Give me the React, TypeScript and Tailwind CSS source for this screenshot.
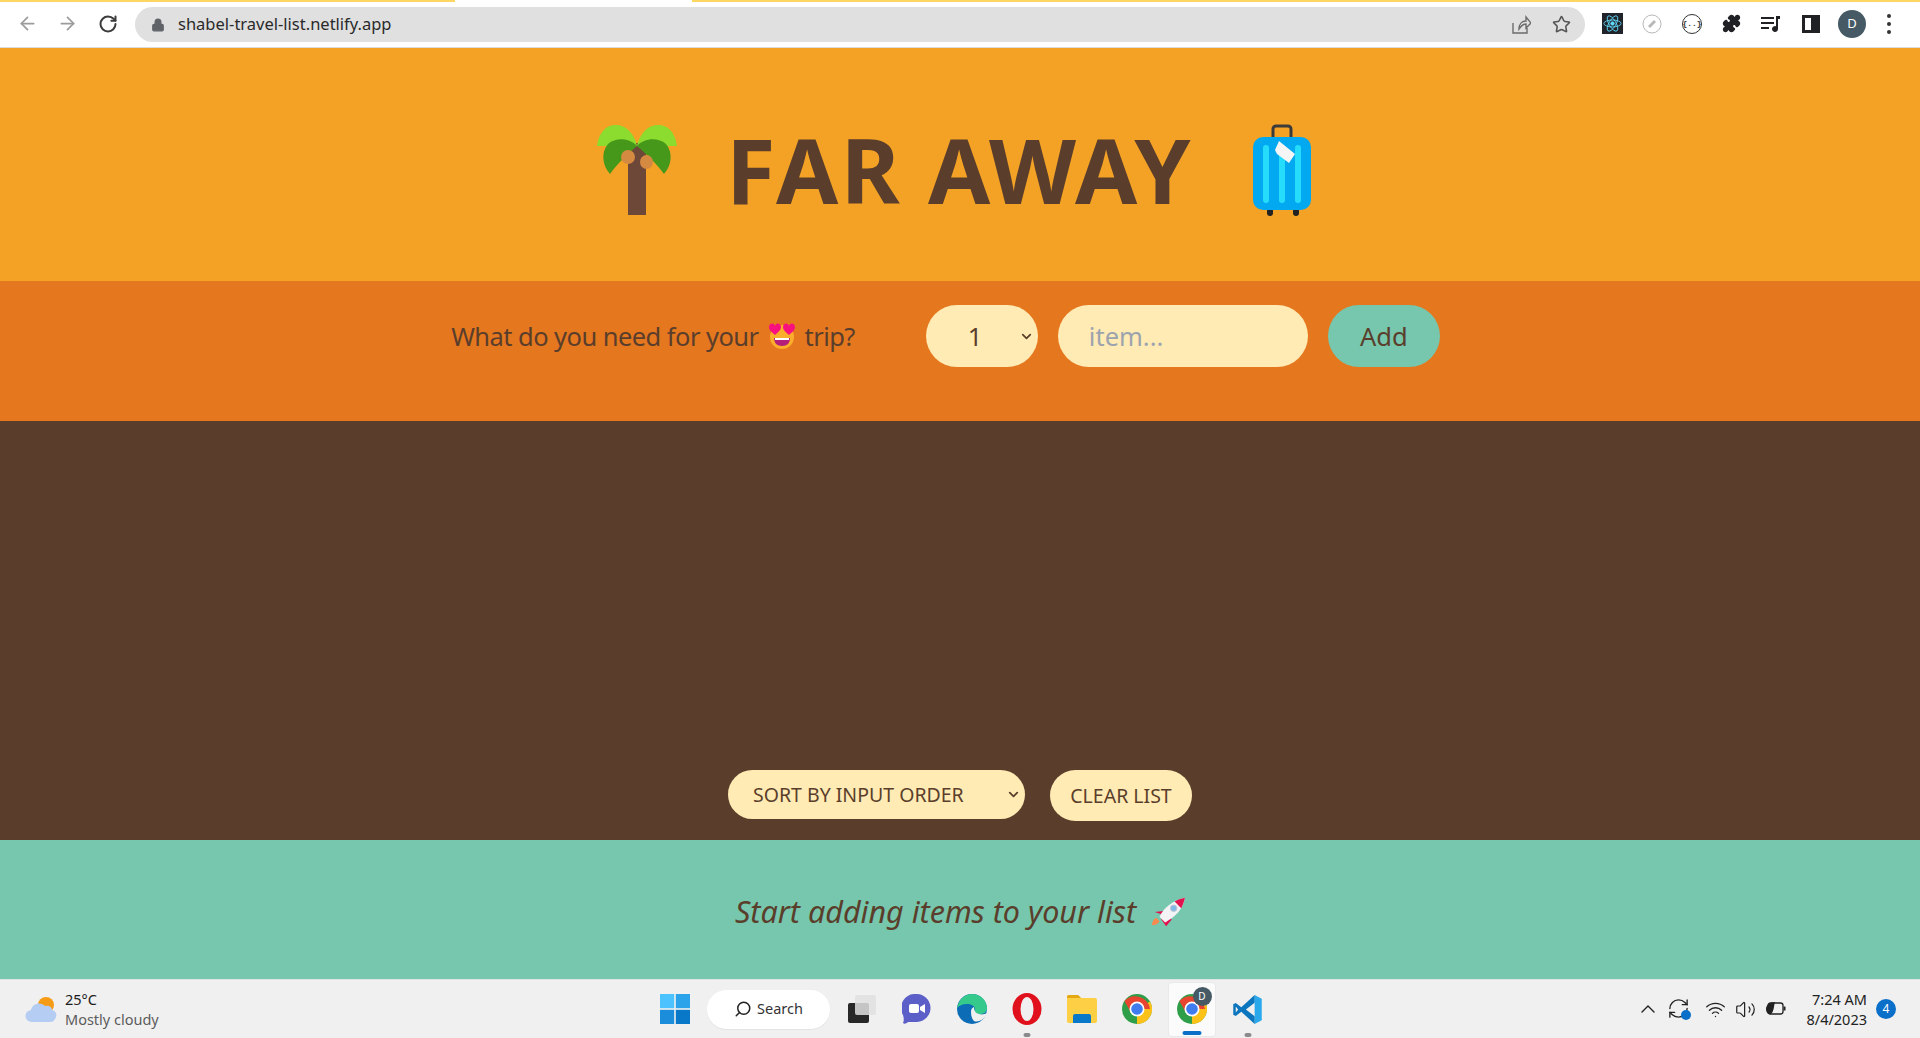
import { ArrowLeft, ArrowRight, RotateCw, RefreshCw, Lock, Star, Puzzle, ChevronUp, ChevronDown, Wifi, Volume2, Search } from 'lucide-react'

const sans = "font-['Noto_Sans','Open_Sans',sans-serif]"

function Palm() {
  return (
    <svg width="80" height="90" viewBox="0 0 80 90">
      <rect x="31" y="18" width="18" height="72" fill="#6d4737" />
      <path d="M0 21C2 7 9 0 19 0c10 0 18 8 21 21C43 8 51 0 61 0c10 0 17 7 19 21z" fill="#8bdc2e" />
      <path d="M13 49C5 40 4 27 11 19c8-7 22-6 29 2-9 8-20 18-27 28z" fill="#46981a" />
      <path d="M67 49c8-9 9-22 2-30-8-7-22-6-29 2 9 8 20 18 27 28z" fill="#46981a" />
      <ellipse cx="31" cy="32" rx="7" ry="7" fill="#d58a41" />
      <ellipse cx="49.5" cy="37" rx="6.5" ry="7" fill="#d58a41" />
    </svg>
  )
}

function Suitcase() {
  return (
    <svg width="58" height="92" viewBox="0 0 58 92">
      <path d="M20 14V5a3 3 0 0 1 3-3h12a3 3 0 0 1 3 3v9" fill="none" stroke="#3b3b3b" strokeWidth="3" />
      <rect x="14" y="84" width="6" height="8" rx="3" fill="#222" />
      <rect x="40" y="84" width="6" height="8" rx="3" fill="#222" />
      <rect x="0" y="13" width="58" height="73" rx="10" fill="#03a9f0" />
      <rect x="10" y="21" width="6" height="58" rx="3" fill="#25dcfb" />
      <rect x="26" y="21" width="6" height="58" rx="3" fill="#25dcfb" />
      <rect x="42" y="21" width="6" height="58" rx="3" fill="#25dcfb" />
      <path d="M26 17l16 13-6 9-12-9-2-4z" fill="#f5f5f5" />
    </svg>
  )
}

function HeartEyes() {
  return (
    <svg width="28" height="26" viewBox="0 0 28 26">
      <circle cx="14" cy="14" r="12" fill="#fbad2c" />
      <path d="M6 15h16c0 5-3 8-8 8s-8-3-8-8z" fill="#b51f7a" />
      <path d="M7 15h14v2H7z" fill="#fff" />
      <path d="M7 12C2 8 1 6 1 4c0-4 5-5 6-1 1-4 6-3 6 1 0 2-1 4-6 8zM21 12c-5-4-6-6-6-8 0-4 5-5 6-1 1-4 6-3 6 1 0 2-1 4-6 8z" fill="#f8107e" />
    </svg>
  )
}

function Rocket() {
  return (
    <svg width="34" height="30" viewBox="0 0 36 30">
      <path d="M1 29c0-4 2-7 5-8l3 4c-2 3-5 4-8 4z" fill="#f98a4f" />
      <path d="M4 15l9-1-2 9 5 7 6-7-3-3z" fill="#e0134f" />
      <path d="M9 20C14 10 23 3 36 0c-2 12-10 20-21 26z" fill="#f4f4f6" />
      <path d="M25 4c3-2 7-3 11-4-1 4-2 7-4 11z" fill="#e0134f" />
      <circle cx="24" cy="11" r="3.5" fill="#7fbbe6" stroke="#c9c9d2" />
    </svg>
  )
}

function ChromeIcon({ size = 30 }: { size?: number }) {
  return (
    <svg width={size} height={size} viewBox="0 0 30 30">
      <circle cx="15" cy="15" r="15" fill="#2f9e48" />
      <path d="M15 15L28 7.5a15 15 0 0 1-13 22.5z" fill="#fcc21a" />
      <path d="M15 15H28A15 15 0 0 0 2.4 7L8 17z" fill="#e8442f" />
      <circle cx="15" cy="15" r="7.5" fill="#fff" />
      <circle cx="15" cy="15" r="5.8" fill="#3f7cf0" />
    </svg>
  )
}

function Pip() {
  return <span className="absolute bottom-[2px] left-1/2 -translate-x-1/2 w-[7px] h-[4px] rounded-full bg-[#8a8a8a]" />
}

function BrowserBar() {
  return (
    <div className="relative h-[48px] shrink-0 bg-white border-b border-[#dcdcdc] flex items-center pl-[17px]">
      <div className="absolute top-0 left-0 w-[455px] h-[2px] bg-[#fdd663]" />
      <div className="absolute top-0 left-[692px] right-0 h-[2px] bg-[#fdd663]" />
      <ArrowLeft size={21} className="text-[#9c9c9c]" />
      <ArrowRight size={21} className="text-[#9c9c9c] ml-[19px]" />
      <RotateCw size={20} strokeWidth={2.4} className="text-[#3c3c3c] ml-[20px]" />
      <div className="ml-[17px] w-[1450px] h-[35px] mt-[2px] rounded-full bg-[#e0e0e0] flex items-center pl-[16px] pr-[14px]">
        <Lock size={14} fill="#5f6368" className="text-[#5f6368]" />
        <span className={`ml-[13px] text-[16.5px] text-[#2a2a2a] ${sans}`}>shabel-travel-list.netlify.app</span>
        <svg width="20" height="20" viewBox="0 0 20 20" fill="none" stroke="#6b6b6b" strokeWidth="1.4" className="ml-auto">
          <path d="M2 8v10h14v-5M8 14c0-5 3-8 7-8V2l5 6-5 5V9c-3 0-5 2-7 5z" />
        </svg>
        <Star size={19} className="text-[#555] ml-[21px]" />
      </div>
      <div className="ml-[17px] w-[21px] h-[21px] bg-[#20232a] flex items-center justify-center">
        <svg width="19" height="19" viewBox="-11 -11 22 22" fill="none" stroke="#61dafb" strokeWidth="1">
          <circle r="2" fill="#61dafb" />
          <ellipse rx="10" ry="4" />
          <ellipse rx="10" ry="4" transform="rotate(60)" />
          <ellipse rx="10" ry="4" transform="rotate(120)" />
        </svg>
      </div>
      <svg width="20" height="20" viewBox="0 0 20 20" className="ml-[19px]">
        <circle cx="10" cy="10" r="9" fill="#fff" stroke="#b8b8b8" />
        <path d="M6 12l6-6 2 2-6 6z" fill="#b8b8b8" />
      </svg>
      <div className="ml-[20px] w-[20px] h-[20px] rounded-full border border-[#333] flex items-center justify-center text-[8px] font-bold text-[#333] font-['Liberation_Mono',monospace]">{'{..}'}</div>
      <Puzzle size={19} fill="#202124" className="text-[#202124] ml-[20px]" />
      <svg width="20" height="18" viewBox="0 0 20 18" className="ml-[20px]" fill="#202124">
        <path d="M0 2h13v2H0zM0 7h13v2H0zM0 12h8v2H0z" />
        <path d="M15 1h4v3h-2v10a3 3 0 1 1-2-2.8z" />
      </svg>
      <div className="ml-[21px] w-[18px] h-[18px] border-[3px] border-[#202124] flex justify-end">
        <div className="w-[6px] bg-[#202124]" />
      </div>
      <div className={`ml-[18px] w-[28px] h-[28px] rounded-full bg-[#455a64] text-white text-[13px] flex items-center justify-center ${sans}`}>D</div>
      <div className="ml-[21px] flex flex-col gap-[4px]">
        <span className="w-[4px] h-[4px] rounded-full bg-[#333]" />
        <span className="w-[4px] h-[4px] rounded-full bg-[#333]" />
        <span className="w-[4px] h-[4px] rounded-full bg-[#333]" />
      </div>
    </div>
  )
}

function Taskbar() {
  return (
    <div className={`h-[59px] shrink-0 bg-[#f0f0f0] border-t border-[#e2e2e2] flex items-center relative ${sans}`}>
      <div className="flex items-center pl-[25px] w-[660px] shrink-0">
        <svg width="32" height="28" viewBox="0 0 32 28">
          <circle cx="21" cy="10" r="8" fill="#f59b16" />
          <path d="M7 27a6 6 0 0 1-1-12c1-6 9-9 14-4 4-1 7 1 7 4 4 1 5 4 4 7s-3 5-6 5z" fill="#b5cdf2" />
        </svg>
        <div className="ml-[8px] text-[14.5px] leading-[20px] mt-[-1px]">
          <div className="text-[#1c1c1c]">25°C</div>
          <div className="text-[#5c5c5c]">Mostly cloudy</div>
        </div>
      </div>
      <div className="flex items-center">
        <svg width="30" height="30" viewBox="0 0 30 30">
          <rect width="14.2" height="14.2" fill="#4cc2ff" />
          <rect x="15.8" width="14.2" height="14.2" fill="#2aa3ea" />
          <rect y="15.8" width="14.2" height="14.2" fill="#1b8ddb" />
          <rect x="15.8" y="15.8" width="14.2" height="14.2" fill="#0a78c9" />
        </svg>
        <div className="ml-[17px] w-[123px] h-[39px] rounded-full bg-white flex items-center justify-center gap-[5px] text-[14.5px] text-[#333] shadow-[0_1px_1px_#e3e3e3]">
          <Search size={18} className="-scale-x-100 text-[#222]" />
          Search
        </div>
        <div className="relative w-[55px] h-[59px] ml-[4px] flex items-center justify-center">
          <svg width="30" height="30" viewBox="0 0 30 30">
            <rect x="1" y="9" width="21" height="20" rx="2" fill="#282828" />
            <rect x="8" y="1" width="21" height="20" rx="2" fill="#e0e0e0" fillOpacity="0.85" />
          </svg>
        </div>
        <div className="relative w-[55px] h-[59px] flex items-center justify-center">
          <svg width="29" height="30" viewBox="0 0 29 30">
            <path d="M14 0a14 14 0 0 1 1 28H6c-2 2-4 2-5 1 1-2 1-5 0-8A14 14 0 0 1 14 0z" fill="#5c5fc7" />
            <rect x="7" y="10" width="10" height="9" rx="2" fill="#fff" />
            <path d="M18 13l5-3v9l-5-3z" fill="#fff" />
          </svg>
        </div>
        <div className="relative w-[55px] h-[59px] flex items-center justify-center">
          <svg width="30" height="32" viewBox="0 0 30 32">
            <circle cx="15" cy="16" r="15" fill="#0c6cb5" />
            <path d="M0 15C2 6 8 1 15 1c9 0 15 7 15 14 0 5-5 7-9 6-3-1-4-3-3-5 0-3-4-5-8-5-5 0-8 2-10 4z" fill="#36c98c" />
            <path d="M14 19c0-3 1-4 3-5 0 3 1 6 5 7 3 1 6 0 8-1-2 6-8 10-13 8-2-2-3-5-3-9z" fill="#f0f0f0" />
          </svg>
        </div>
        <div className="relative w-[55px] h-[59px] flex items-center justify-center">
          <svg width="30" height="32" viewBox="0 0 30 32">
            <ellipse cx="15" cy="16" rx="14.5" ry="16" fill="#e0111c" />
            <ellipse cx="15" cy="16" rx="6.5" ry="12" fill="#f0f0f0" />
          </svg>
          <Pip />
        </div>
        <div className="relative w-[55px] h-[59px] flex items-center justify-center">
          <svg width="30" height="28" viewBox="0 0 30 28">
            <path d="M0 2a2 2 0 0 1 2-2h9l3 3h14a2 2 0 0 1 2 2v21a2 2 0 0 1-2 2H2a2 2 0 0 1-2-2z" fill="#fccf44" />
            <path d="M0 2a2 2 0 0 1 2-2h9l3 3h-14z" fill="#e4a812" />
            <path d="M6 28v-7a2 2 0 0 1 2-2h14a2 2 0 0 1 2 2v7z" fill="#0a78c9" />
          </svg>
        </div>
        <div className="relative w-[55px] h-[59px] flex items-center justify-center">
          <ChromeIcon />
        </div>
        <div className="relative w-[48px] h-[55px] mx-[3.5px] bg-[#fbfbfb] rounded-[4px] border border-[#e9e9e9] flex items-center justify-center">
          <ChromeIcon />
          <span className="absolute top-[4px] right-[3px] w-[19px] h-[19px] rounded-full bg-[#455a64] text-[10px] text-white flex items-center justify-center">D</span>
          <span className="absolute bottom-[1px] left-1/2 -translate-x-1/2 w-[19px] h-[4px] rounded-full bg-[#0a6fc9]" />
        </div>
        <div className="relative w-[55px] h-[59px] ml-[1px] flex items-center justify-center">
          <svg width="31" height="31" viewBox="0 0 100 100">
            <path d="M73 3l23 12v70L73 97z" fill="#29a9eb" />
            <path d="M73 3L30 43 12 29l-8 4v34l8 4 18-14 43 40V72L45 50l28-22z" fill="#0b76bd" />
            <path d="M12 40l8 10-8 10z" fill="#f0f0f0" />
          </svg>
          <Pip />
        </div>
      </div>
      <div className="ml-auto flex items-center pr-[24px]">
        <ChevronUp size={24} strokeWidth={1.4} className="text-[#222]" />
        <div className="relative ml-[7px] w-[24px] h-[24px]">
          <RefreshCw size={23} strokeWidth={1.4} className="text-[#222]" />
          <span className="absolute right-0 bottom-[1px] w-[10px] h-[10px] rounded-full bg-[#0a6fc9]" />
        </div>
        <Wifi size={21} strokeWidth={1.5} className="ml-[14px] text-[#222]" />
        <Volume2 size={21} strokeWidth={1.4} className="ml-[9px] text-[#222]" />
        <svg width="21" height="16" viewBox="0 0 21 16" className="ml-[9px]">
          <rect x="3" y="2" width="15" height="11" rx="2.5" fill="none" stroke="#222" strokeWidth="1.3" />
          <rect x="18.5" y="5.5" width="2" height="4" fill="#222" />
          <path d="M1 8c0-4 4-7 9-7-1 3-1 10-4 12-3 1-5-2-5-5z" fill="#222" />
        </svg>
        <div className="ml-[20px] text-right text-[14.5px] leading-[20px] text-[#222]">
          <div>7:24 AM</div>
          <div>8/4/2023</div>
        </div>
        <span className="ml-[9px] w-[20px] h-[20px] rounded-full bg-[#0a6fc9] text-white text-[12px] flex items-center justify-center">4</span>
      </div>
    </div>
  )
}

export default function App() {
  return (
    <div className={`h-[1038px] w-[1920px] overflow-hidden flex flex-col text-[#5a3e2b] ${sans}`}>
      <BrowserBar />

      <header className="h-[233px] shrink-0 bg-[#f4a226] flex items-center justify-center pt-[11px] pr-[12px]">
        <Palm />
        <h1 className="ml-[49px] mr-[60px] mb-[3px] text-[90px] font-bold leading-none tracking-[2.4px]">FAR AWAY</h1>
        <Suitcase />
      </header>

      <form className="h-[140px] shrink-0 bg-[#e5771f] flex items-center justify-center pr-[29px] pb-[30px]">
        <h3 className="text-[25.5px] tracking-[-0.55px] flex items-center gap-[9px] mr-[71px]">
          What do you need for your <HeartEyes /> trip?
        </h3>
        <div className="relative">
          <select className="appearance-none block w-[112px] h-[62px] rounded-full bg-[#ffebb3] pl-[42px] text-[25.5px]">
            <option>1</option>
          </select>
          <ChevronDown size={15} strokeWidth={2.8} className="absolute right-[4px] top-[24px] pointer-events-none" />
        </div>
        <input
          placeholder="item..."
          className="ml-[20px] w-[250px] h-[62px] rounded-full bg-[#ffebb3] px-[31px] text-[25.5px] placeholder:text-[#9ca3af]"
        />
        <button type="button" className="ml-[20px] w-[112px] h-[62px] rounded-full bg-[#76c7ad] text-[25.5px]">
          Add
        </button>
      </form>

      <main className="flex-1 bg-[#5a3e2b] flex items-end justify-center gap-[25px] pb-[19px]">
        <div className="relative mb-[2px]">
          <select className="appearance-none block w-[297px] h-[49px] rounded-full bg-[#ffebb3] pl-[25px] text-[19.5px] uppercase">
            <option>Sort by input order</option>
          </select>
          <ChevronDown size={15} strokeWidth={2.8} className="absolute right-[4px] top-[17px] pointer-events-none" />
        </div>
        <button type="button" className="w-[142px] h-[51px] rounded-full bg-[#ffebb3] text-[19.5px] uppercase">
          Clear list
        </button>
      </main>

      <footer className="h-[139px] shrink-0 bg-[#76c7ad] flex items-center justify-center gap-[15px] pt-[4px]">
        <em className="text-[30.5px]">Start adding items to your list</em>
        <Rocket />
      </footer>

      <Taskbar />
    </div>
  )
}
